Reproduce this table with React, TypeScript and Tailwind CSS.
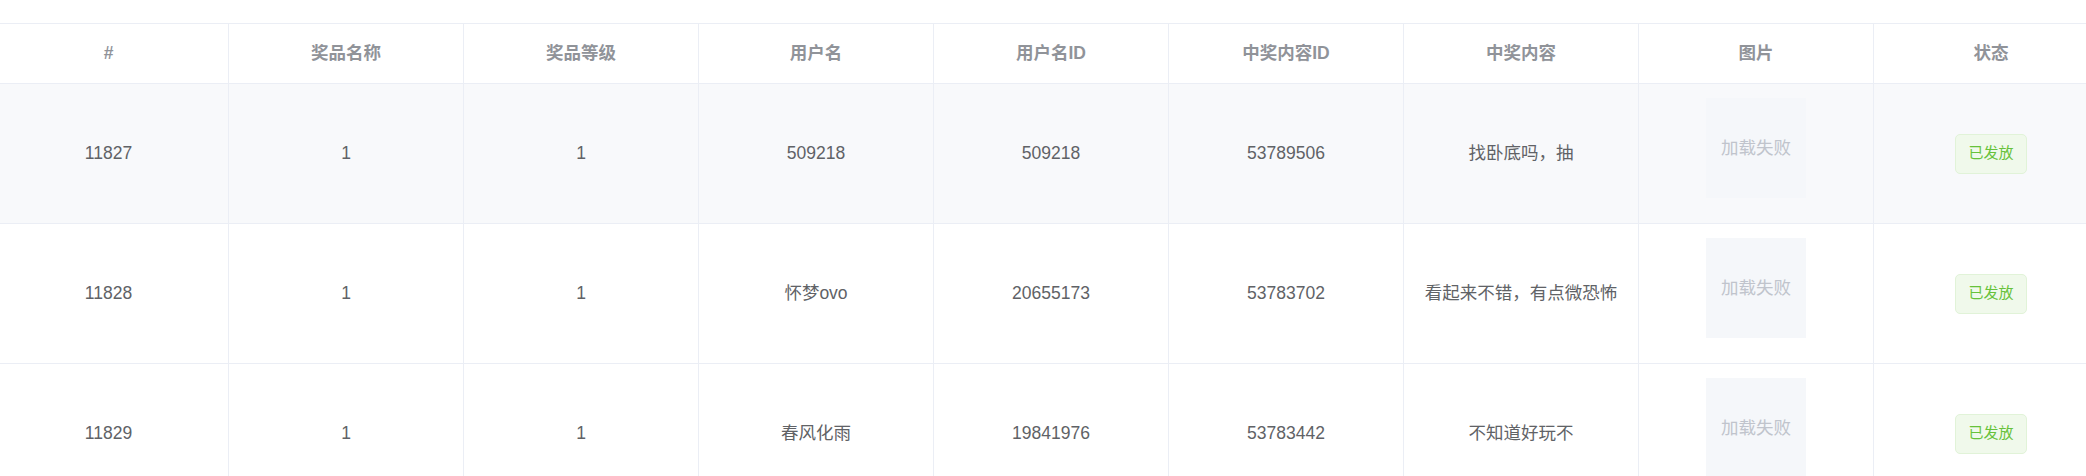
import React from "react";

const headers = ["#", "奖品名称", "奖品等级", "用户名", "用户名ID", "中奖内容ID", "中奖内容", "图片", "状态"];

const rows = [
  ["11827", "1", "1", "509218", "509218", "53789506", "找卧底吗，抽"],
  ["11828", "1", "1", "怀梦ovo", "20655173", "53783702", "看起来不错，有点微恐怖"],
  ["11829", "1", "1", "春风化雨", "19841976", "53783442", "不知道好玩不"],
];

const font = { fontFamily: '"Liberation Sans", Arial, "Noto Sans CJK SC", sans-serif' };

export default function App() {
  return (
    <div className="w-[2086px] h-[476px] overflow-hidden bg-white" style={font}>
      <div className="h-[23px]" />
      <div className="ml-[-6px] w-[2115px] border-t border-[#ebeef5]">
        <div className="flex h-[60px] border-b border-[#ebeef5] bg-white">
          {headers.map((h, i) => (
            <div
              key={i}
              className={`w-[235px] shrink-0 border-r border-[#ebeef5] flex items-center justify-center text-[17.5px] font-bold text-[#909399] ${i === 0 ? "pr-[5px]" : ""}`}
            >
              {h}
            </div>
          ))}
        </div>
        {rows.map((r, ri) => (
          <div
            key={ri}
            className={`flex h-[140px] border-b border-[#ebeef5] ${ri === 0 ? "bg-[#f8f9fb]" : "bg-white"}`}
          >
            {r.map((c, ci) => (
              <div
                key={ci}
                className={`w-[235px] shrink-0 border-r border-[#ebeef5] flex items-center justify-center text-[17.5px] text-[#606266] ${ci === 0 ? "pr-[5px]" : ""}`}
              >
                {c}
              </div>
            ))}
            <div className="w-[235px] shrink-0 border-r border-[#ebeef5] flex items-start justify-center pt-[14px]">
              <div className="w-[100px] h-[100px] bg-[#f5f7fa] flex items-center justify-center text-[17.5px] text-[#c0c4cc]">
                加载失败
              </div>
            </div>
            <div className="w-[235px] shrink-0 border-r border-[#ebeef5] flex items-center justify-center">
              <span className="h-[40px] px-[12px] flex items-center rounded-[5px] border border-[#e1f3d8] bg-[#f0f9eb] text-[15px] text-[#67c23a]">
                已发放
              </span>
            </div>
          </div>
        ))}
      </div>
    </div>
  );
}
